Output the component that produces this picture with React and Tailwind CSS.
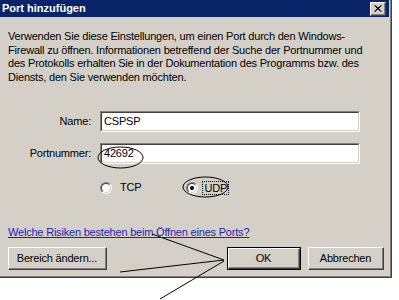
import React from 'react'

const font = { fontFamily: '"Liberation Sans", Arial, sans-serif' }

function Raised({ className = '', children, isDefault }) {
    return (
        <div className={`${isDefault ? 'border border-black' : ''} ${className}`}>
            <div className="h-full w-full border-t border-l border-white border-b border-r border-b-[#404040] border-r-[#404040]">
                <div className="h-full w-full flex items-center justify-center border-b border-r border-b-[#808080] border-r-[#808080] bg-[#d4d0c8]">
                    {children}
                </div>
            </div>
        </div>
    )
}

function Field({ label, value }) {
    return (
        <div className="flex items-center">
            <div className="w-[84px] text-right pr-px text-[11px]">{label}</div>
            <div className="ml-2 w-[260px] h-[21px] border-t border-l border-t-[#808080] border-l-[#808080] border-b border-r border-b-white border-r-white">
                <div className="h-full w-full bg-white border-t border-l border-t-[#404040] border-l-[#404040] border-b border-r border-b-[#d4d0c8] border-r-[#d4d0c8] flex items-center pl-[2px] text-[11px]">
                    {value}
                </div>
            </div>
        </div>
    )
}

function Radio({ checked }) {
    return (
        <div className="w-[12px] h-[12px] rounded-full border border-t-[#808080] border-l-[#808080] border-b-white border-r-white">
            <div className="w-full h-full rounded-full bg-white border border-t-[#404040] border-l-[#404040] border-b-[#d4d0c8] border-r-[#d4d0c8] flex items-center justify-center">
                {checked && <div className="w-[4px] h-[4px] rounded-full bg-black" />}
            </div>
        </div>
    )
}

export default function App() {
    return (
        <div className="relative w-[399px] h-[300px] bg-white overflow-hidden text-black tracking-[-0.2px]" style={font}>
            <div className="w-[392px] h-[278px] bg-[#d4d0c8] border-r border-b border-r-[#404040] border-b-[#404040]">
                <div className="h-full w-full border-r border-b border-r-[#808080] border-b-[#808080] flex flex-col">
                    {/* title bar */}
                    <div className="h-[17px] w-[389px] bg-[#0a246a] flex items-center justify-between pl-[2px] pr-[3px]">
                        <span className="text-white font-bold text-[11px] leading-none tracking-normal">Port hinzufügen</span>
                        <Raised className="w-[16px] h-[14px] mt-[1px]">
                            <svg width="8" height="7" viewBox="0 0 8 7">
                                <path d="M0.5 0.5 L7 6.5 M1.5 0.5 L7.5 6.5 M7 0.5 L0.5 6.5 M7.5 0.5 L1 6.5" stroke="black" strokeWidth="1" />
                            </svg>
                        </Raised>
                    </div>

                    <div className="pl-2 pt-[13px] flex flex-col">
                        <p className="text-[11px] leading-[13.5px] whitespace-nowrap">
                            Verwenden Sie diese Einstellungen, um einen Port durch den Windows-<br />
                            Firewall zu öffnen. Informationen betreffend der Suche der Portnummer und<br />
                            des Protokolls erhalten Sie in der Dokumentation des Programms bzw. des<br />
                            Diensts, den Sie verwenden möchten.
                        </p>

                        <div className="mt-[27px] flex flex-col gap-[11px]">
                            <Field label="Name:" value="CSPSP" />
                            <Field label="Portnummer:" value="42692" />
                        </div>

                        <div className="mt-[17px] h-[13px] flex items-center pl-[92px] text-[11px]">
                            <Radio />
                            <span className="ml-[8px]">TCP</span>
                            <div className="ml-[45px]"><Radio checked /></div>
                            <span className="ml-[4px] px-px border border-dotted border-black leading-[12px]">UDP</span>
                        </div>

                        <div className="mt-[32px] h-[13px] text-[11px] leading-[13px] text-[#1f1fb4] underline whitespace-nowrap">
                            Welche Risiken bestehen beim Öffnen eines Ports?
                        </div>

                        <div className="mt-[8px] flex items-center text-[11px]">
                            <Raised className="w-[99px] h-[23px]">Bereich ändern...</Raised>
                            <Raised isDefault className="ml-[120px] w-[74px] h-[23px]">OK</Raised>
                            <Raised className="ml-[7px] w-[76px] h-[23px]">Abbrechen</Raised>
                        </div>
                    </div>
                </div>
            </div>

            {/* annotations */}
            <svg className="absolute inset-0 pointer-events-none" width="399" height="300">
                <ellipse cx="120.5" cy="157.5" rx="22.5" ry="10.5" fill="none" stroke="black" strokeWidth="1" />
                <ellipse cx="205.5" cy="187" rx="22.5" ry="10" fill="none" stroke="black" strokeWidth="1" />
                <line x1="152" y1="234" x2="224" y2="260" stroke="black" strokeWidth="1" />
                <line x1="120" y1="272" x2="224" y2="260" stroke="black" strokeWidth="1" />
                <line x1="160" y1="299" x2="224" y2="261" stroke="black" strokeWidth="1" />
            </svg>
        </div>
    )
}
